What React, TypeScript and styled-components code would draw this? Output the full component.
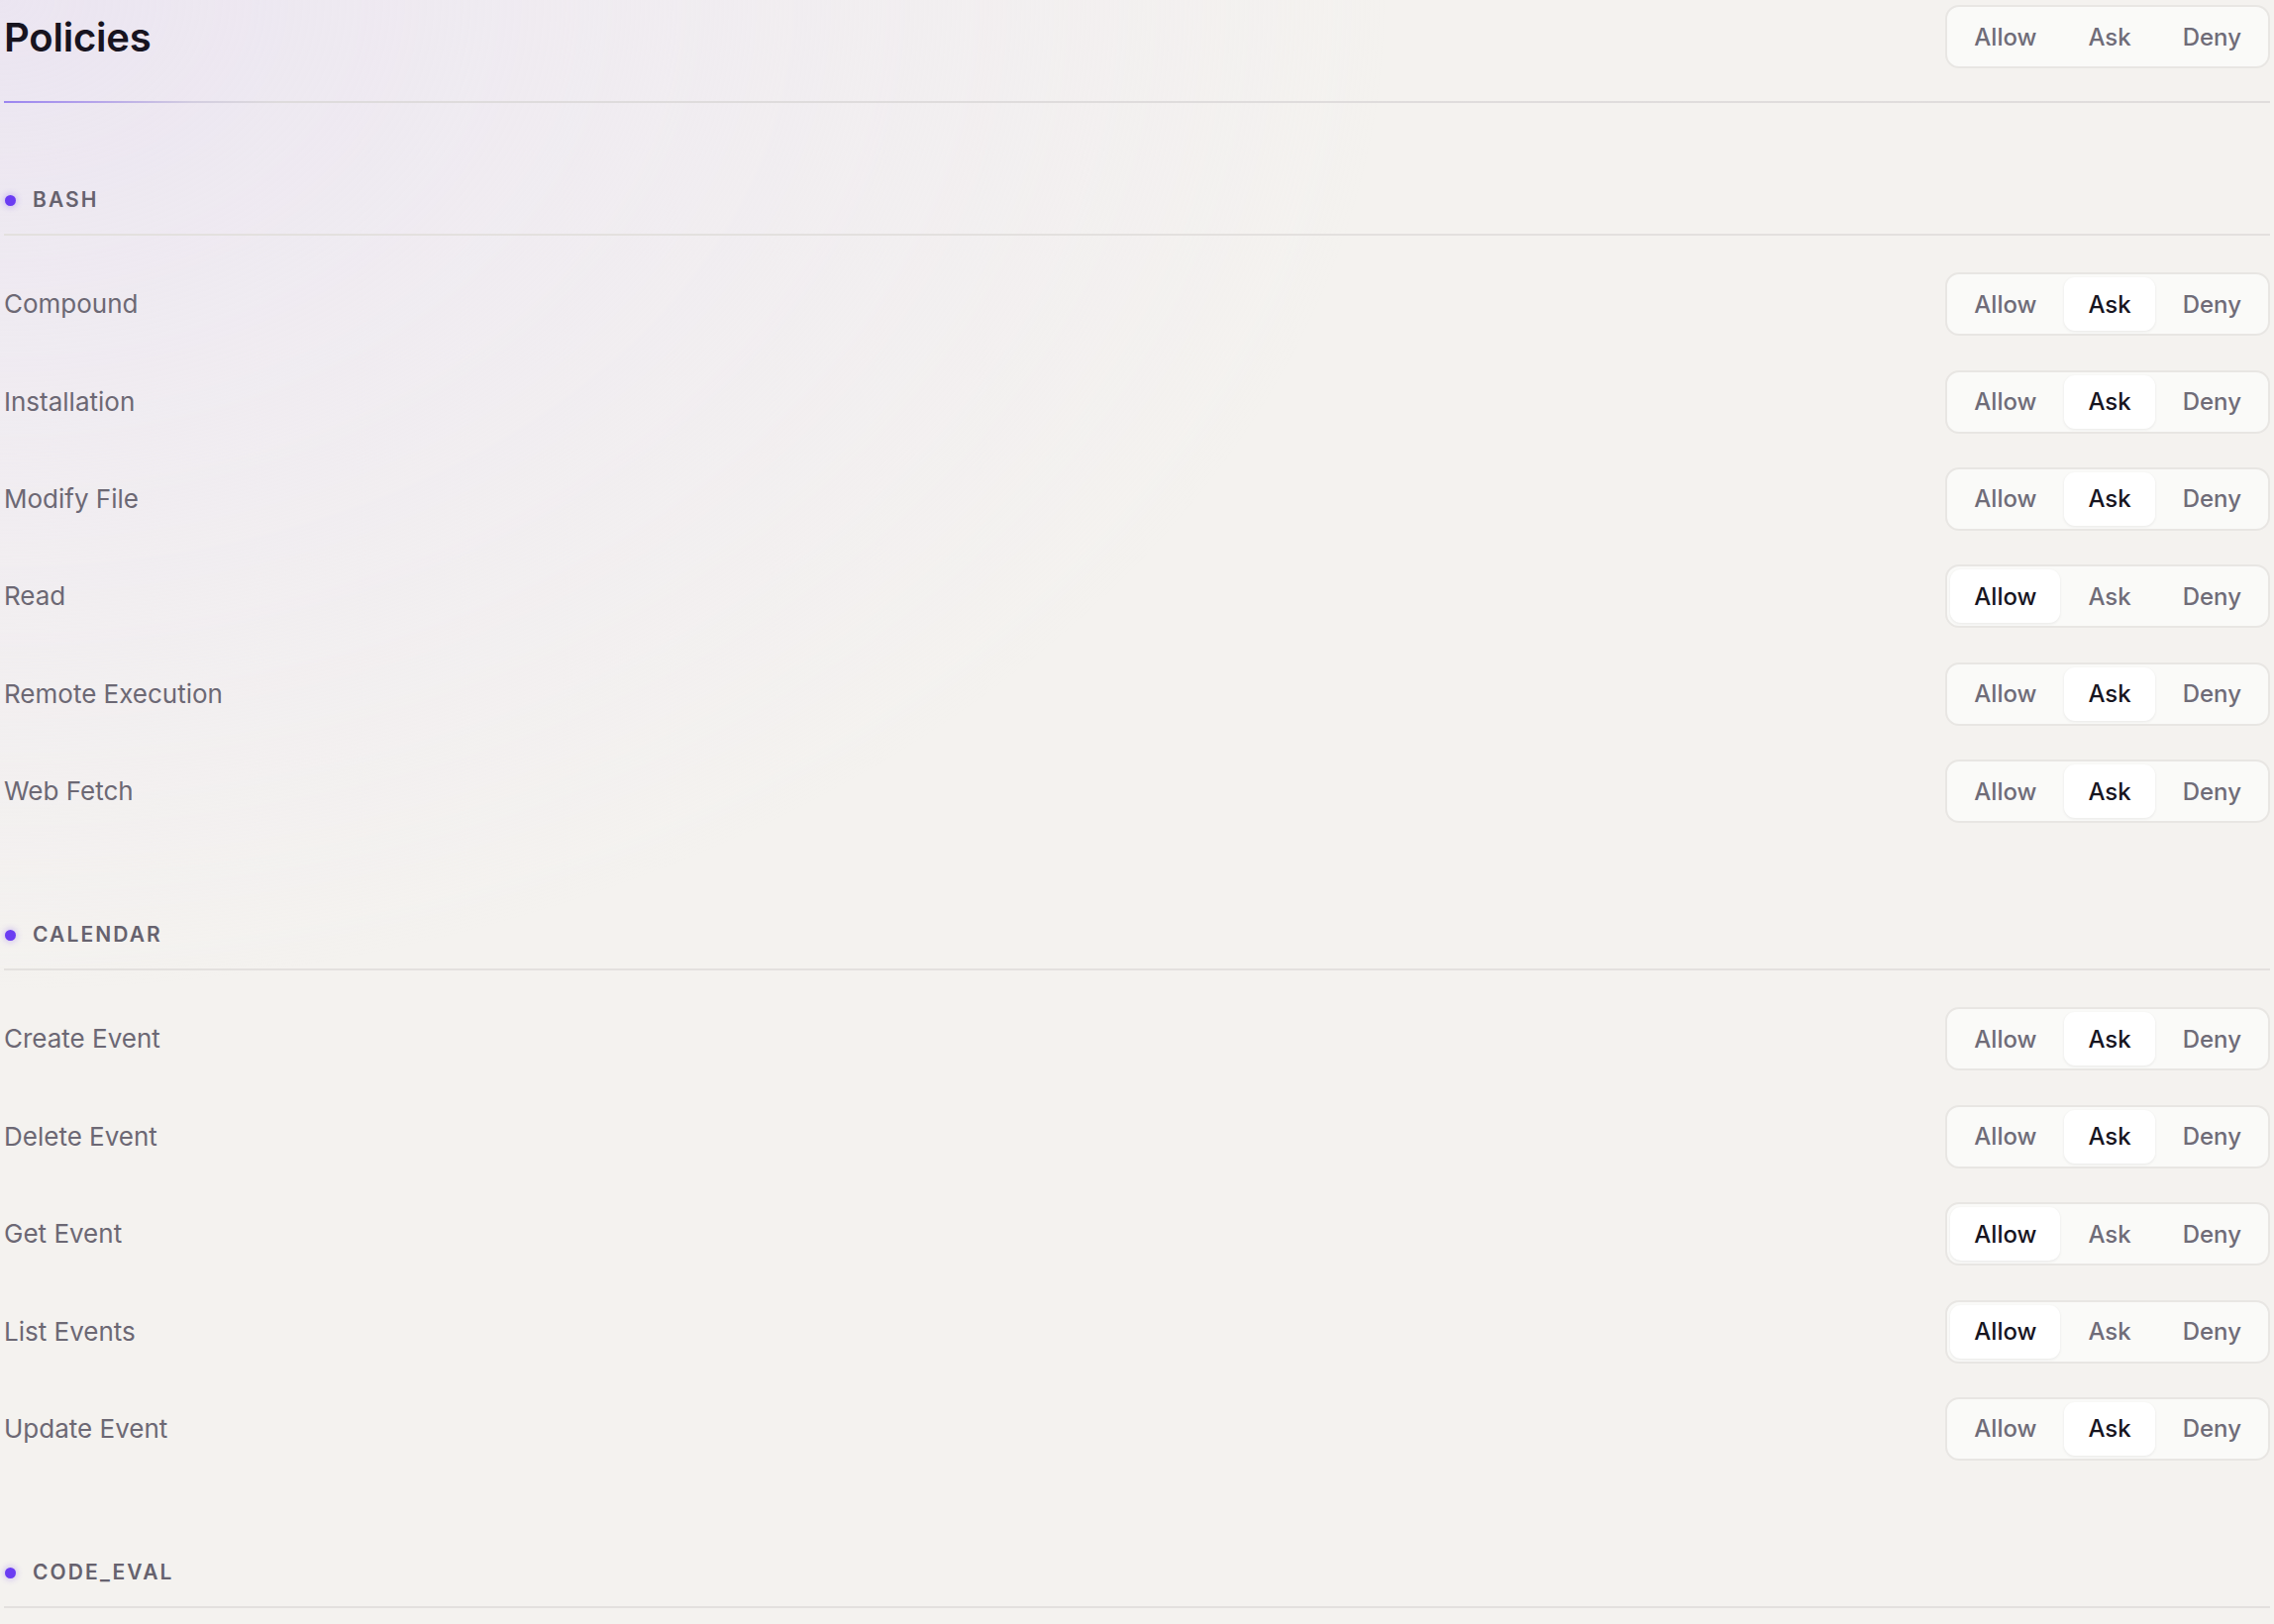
import React, { useState } from 'react';
import styled, { createGlobalStyle } from 'styled-components';

type Mode = 'Allow' | 'Ask' | 'Deny';

const GlobalStyle = createGlobalStyle`
  html, body {
    margin: 0;
    padding: 0;
    background: #f4f2ef;
  }
  body {
    font-family: Inter, "Noto Sans", "Liberation Sans", sans-serif;
    -webkit-font-smoothing: antialiased;
  }
  * { box-sizing: border-box; }
`;

const Page = styled.div`
  min-height: 100vh;
  padding: 0 4px 40px;
  background:
    radial-gradient(ellipse 1400px 1000px at 0 0, #ebe5f1 0%, rgba(238, 233, 242, 0.7) 40%, rgba(244, 242, 239, 0) 100%),
    #f4f2ef;
`;

const Header = styled.header`
  display: flex;
  align-items: center;
  justify-content: space-between;
  padding-top: 5px;
  padding-bottom: 33px;
`;

const Title = styled.h1`
  margin: 2px 0 0;
  font-size: 40px;
  line-height: 48px;
  font-weight: 600;
  color: #17141f;
  letter-spacing: -0.2px;
`;

const HeaderRule = styled.div`
  height: 2px;
  background: linear-gradient(
    90deg,
    #9b85f0 0px,
    #b4a3ea 90px,
    #d3cde0 190px,
    #dedbdc 280px,
    #e0dddc 100%
  );
`;

const Section = styled.section`
  margin-top: 82px;
  &:first-of-type {
    margin-top: 84px;
  }
`;

const SectionHead = styled.div`
  display: flex;
  align-items: center;
  gap: 17px;
  height: 50px;
  padding-bottom: 20px;
  border-bottom: 2px solid #e3e0de;
`;

const Dot = styled.span`
  width: 11px;
  height: 11px;
  margin-left: 1px;
  border-radius: 50%;
  background: #6b3cf2;
  box-shadow: 0 0 6px 1px rgba(107, 60, 242, 0.3);
  flex: none;
`;

const SectionLabel = styled.span`
  font-size: 21px;
  line-height: 28px;
  font-weight: 600;
  letter-spacing: 0.1em;
  text-transform: uppercase;
  color: #66626e;
`;

const RowList = styled.div`
  padding-top: 20px;
`;

const Row = styled.div`
  display: flex;
  align-items: center;
  justify-content: space-between;
  padding: 17.2px 0;
`;

const RowLabel = styled.span`
  font-size: 26px;
  line-height: 32px;
  color: #6c6874;
`;

const Segmented = styled.div`
  display: inline-flex;
  align-items: center;
  gap: 4px;
  padding: 3px;
  border: 2px solid #e8e6e3;
  border-radius: 14px;
  background: #fafaf8;
`;

const SegButton = styled.button<{ $active: boolean }>`
  height: 54px;
  padding: 0 24px;
  border: none;
  border-radius: 11px;
  font-family: inherit;
  font-size: 24px;
  font-weight: 500;
  cursor: pointer;
  color: ${(p) => (p.$active ? '#17151f' : '#6f6c78')};
  background: ${(p) => (p.$active ? '#ffffff' : 'transparent')};
  box-shadow: ${(p) => (p.$active ? '0 1px 3px rgba(30, 20, 40, 0.08)' : 'none')};
`;

const MODES: Mode[] = ['Allow', 'Ask', 'Deny'];

function Toggle({ value, onChange }: { value: Mode | null; onChange: (m: Mode) => void }) {
  return (
    <Segmented>
      {MODES.map((m) => (
        <SegButton key={m} $active={value === m} onClick={() => onChange(m)}>
          {m}
        </SegButton>
      ))}
    </Segmented>
  );
}

const INITIAL: { name: string; rows: { label: string; mode: Mode }[] }[] = [
  {
    name: 'bash',
    rows: [
      { label: 'Compound', mode: 'Ask' },
      { label: 'Installation', mode: 'Ask' },
      { label: 'Modify File', mode: 'Ask' },
      { label: 'Read', mode: 'Allow' },
      { label: 'Remote Execution', mode: 'Ask' },
      { label: 'Web Fetch', mode: 'Ask' },
    ],
  },
  {
    name: 'calendar',
    rows: [
      { label: 'Create Event', mode: 'Ask' },
      { label: 'Delete Event', mode: 'Ask' },
      { label: 'Get Event', mode: 'Allow' },
      { label: 'List Events', mode: 'Allow' },
      { label: 'Update Event', mode: 'Ask' },
    ],
  },
  {
    name: 'code_eval',
    rows: [],
  },
];

export default function App() {
  const [groups, setGroups] = useState(INITIAL);
  const [globalMode, setGlobalMode] = useState<Mode | null>(null);

  const setRow = (gi: number, ri: number, m: Mode) => {
    setGroups((prev) =>
      prev.map((g, i) =>
        i !== gi ? g : { ...g, rows: g.rows.map((r, j) => (j === ri ? { ...r, mode: m } : r)) }
      )
    );
  };

  return (
    <>
      <GlobalStyle />
      <Page>
        <Header>
          <Title>Policies</Title>
          <Toggle value={globalMode} onChange={setGlobalMode} />
        </Header>
        <HeaderRule />
        {groups.map((g, gi) => (
          <Section key={g.name}>
            <SectionHead>
              <Dot />
              <SectionLabel>{g.name}</SectionLabel>
            </SectionHead>
            {g.rows.length > 0 && (
              <RowList>
                {g.rows.map((r, ri) => (
                  <Row key={r.label}>
                    <RowLabel>{r.label}</RowLabel>
                    <Toggle value={r.mode} onChange={(m) => setRow(gi, ri, m)} />
                  </Row>
                ))}
              </RowList>
            )}
          </Section>
        ))}
      </Page>
    </>
  );
}
